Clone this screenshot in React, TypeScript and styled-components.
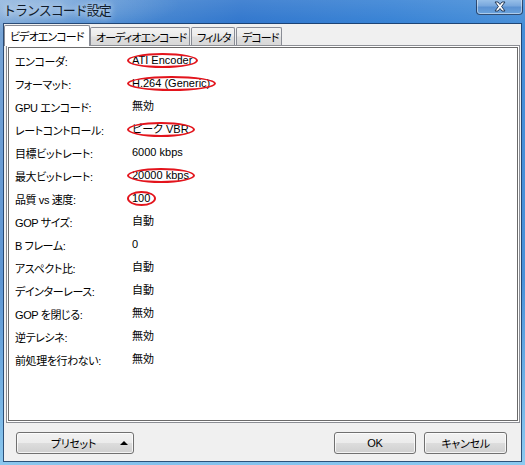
import React from "react";
import styled, { createGlobalStyle, css } from "styled-components";

const GlobalStyle = createGlobalStyle`
  html, body { margin: 0; padding: 0; width: 525px; height: 465px; overflow: hidden; background: #4a86c8; }
  #root { width: 525px; height: 465px; }
  * { box-sizing: border-box; }
`;

const UI_FONT = `"Liberation Sans", "Noto Sans CJK JP", sans-serif`;

const Window = styled.div`
  width: 525px;
  height: 465px;
  display: flex;
  flex-direction: column;
  padding: 0 4px 4px 4px;
  font-family: ${UI_FONT};
  font-feature-settings: "palt";
  background:
    radial-gradient(ellipse 140px 30px at 40px 4px, rgba(255, 255, 255, 0.25), rgba(255, 255, 255, 0)),
    linear-gradient(180deg, rgba(255, 255, 255, 0.12) 0%, rgba(255, 255, 255, 0) 6%, rgba(140, 210, 245, 0) 60%, rgba(160, 220, 248, 0.75) 100%),
    linear-gradient(100deg, #7aa6d6 0%, #4b8ad0 14%, #2d74cc 40%, #3480d4 65%, #4e95da 100%);
`;

const TitleBar = styled.div`
  height: 24px;
  display: flex;
  align-items: flex-start;
  justify-content: space-between;
`;

const Title = styled.div`
  margin-left: -1px;
  line-height: 20px;
  font-size: 13px;
  font-family: "Noto Sans CJK JP", sans-serif;
  font-feature-settings: normal;
  letter-spacing: -1px;
  color: #101c2c;
  text-shadow: 0 0 6px rgba(255, 255, 255, 0.75), 0 0 10px rgba(255, 255, 255, 0.5);
`;

const CloseButton = styled.div`
  width: 47px;
  height: 16px;
  margin-top: -1px;
  margin-right: -2px;
  border: 1px solid rgba(24, 48, 84, 0.8);
  border-top: none;
  border-radius: 0 0 4px 4px;
  background: linear-gradient(180deg, #9cc3ea 0%, #79a8dd 45%, #5b92d2 55%, #6aa3dc 100%);
  box-shadow: inset 0 0 0 1px rgba(255, 255, 255, 0.45);
  display: flex;
  align-items: center;
  justify-content: center;
`;

const Client = styled.div`
  flex: 1;
  display: flex;
  flex-direction: column;
  background: #f0f0f0;
  box-shadow: 0 0 0 1px rgba(22, 52, 92, 0.8);
  padding: 0 1px 0 2px;
`;

const TabStrip = styled.div`
  height: 21px;
  display: flex;
  align-items: flex-end;
  position: relative;
  z-index: 1;
`;

const Tab = styled.div<{ $active?: boolean; $width: number; $gap?: number }>`
  width: ${(p) => p.$width}px;
  margin-left: ${(p) => p.$gap ?? 0}px;
  display: flex;
  align-items: center;
  padding-left: 5px;
  font-size: 11px;
  letter-spacing: -0.9px;
  color: #000;
  border: 1px solid #898c95;
  border-bottom: none;
  border-radius: 2px 2px 0 0;
  white-space: nowrap;
  overflow: hidden;
  ${(p) =>
    p.$active
      ? css`
          height: 21px;
          margin-bottom: -1px;
          background: #ffffff;
        `
      : css`
          height: 18px;
          background: linear-gradient(180deg, #f3f3f3 0%, #ebebeb 45%, #dedede 55%, #d8d8d8 100%);
        `}
`;

const TabPage = styled.div`
  height: 378px;
  border: 1px solid #8c8e94;
  background: #ffffff;
  padding: 1px;
  display: flex;
`;

const Sheet = styled.div`
  flex: 1;
  border: 1px solid #6b6b6b;
  background: #ffffff;
  padding: 1px 0 0 6px;
`;

const Grid = styled.div`
  display: grid;
  grid-template-columns: 117px auto;
  grid-auto-rows: 23px;
  align-items: center;
  justify-content: start;
`;

const Label = styled.div`
  font-size: 11px;
  letter-spacing: -0.4px;
  color: #000;
  white-space: nowrap;
`;

const Value = styled.span<{ $circled?: boolean }>`
  justify-self: start;
  position: relative;
  display: inline-block;
  font-size: 11px;
  line-height: 13px;
  color: #000;
  white-space: nowrap;
  ${(p) =>
    p.$circled &&
    css`
      &::after {
        content: "";
        position: absolute;
        left: -5px;
        right: -6px;
        top: -1px;
        bottom: -1px;
        border: 2px solid #e3141c;
        border-radius: 50%;
      }
    `}
`;

const Footer = styled.div`
  flex: 1;
  display: flex;
  align-items: flex-start;
  padding: 9px 13px 0 10px;
`;

const Button = styled.div<{ $width: number; $push?: boolean; $gap?: number }>`
  width: ${(p) => p.$width}px;
  height: 22px;
  margin-left: ${(p) => (p.$push ? "auto" : `${p.$gap ?? 0}px`)};
  border: 1px solid #707070;
  border-radius: 3px;
  background: linear-gradient(180deg, #f2f2f2 0%, #ebebeb 50%, #dddddd 50%, #cfcfcf 100%);
  box-shadow: inset 0 0 0 1px rgba(255, 255, 255, 0.75);
  display: flex;
  align-items: center;
  justify-content: center;
  font-size: 11px;
  letter-spacing: -0.3px;
  color: #000;
`;

const MenuButton = styled(Button)`
  justify-content: flex-start;
  padding: 0 5px 0 10px;
`;

const ButtonText = styled.span`
  flex: 1;
  text-align: center;
`;

const UpArrow = styled.span`
  width: 0;
  height: 0;
  border-left: 4px solid transparent;
  border-right: 4px solid transparent;
  border-bottom: 4px solid #000;
`;

const rows: { label: string; value: string; circled?: boolean }[] = [
  { label: "エンコーダ:", value: "ATI Encoder", circled: true },
  { label: "フォーマット:", value: "H.264 (Generic)", circled: true },
  { label: "GPU エンコード:", value: "無効" },
  { label: "レートコントロール:", value: "ピーク VBR", circled: true },
  { label: "目標ビットレート:", value: "6000 kbps" },
  { label: "最大ビットレート:", value: "20000 kbps", circled: true },
  { label: "品質 vs 速度:", value: "100", circled: true },
  { label: "GOP サイズ:", value: "自動" },
  { label: "B フレーム:", value: "0" },
  { label: "アスペクト比:", value: "自動" },
  { label: "デインターレース:", value: "自動" },
  { label: "GOP を閉じる:", value: "無効" },
  { label: "逆テレシネ:", value: "無効" },
  { label: "前処理を行わない:", value: "無効" },
];

export default function App() {
  return (
    <>
      <GlobalStyle />
      <Window>
        <TitleBar>
          <Title>トランスコード設定</Title>
          <CloseButton>
            <svg width="14" height="11" viewBox="0 0 14 11">
              <path
                d="M2 1 L5 1 L7 3.5 L9 1 L12 1 L8.6 5.5 L12 10 L9 10 L7 7.5 L5 10 L2 10 L5.4 5.5 Z"
                fill="#ffffff"
                stroke="#243a58"
                strokeWidth="1"
                strokeLinejoin="round"
              />
            </svg>
          </CloseButton>
        </TitleBar>
        <Client>
          <TabStrip>
            <Tab $active $width={86} $gap={-2}>ビデオエンコード</Tab>
            <Tab $width={100}>オーディオエンコード</Tab>
            <Tab $width={44} $gap={1}>フィルタ</Tab>
            <Tab $width={46} $gap={1}>デコード</Tab>
          </TabStrip>
          <TabPage>
            <Sheet>
              <Grid>
                {rows.map((r) => (
                  <React.Fragment key={r.label}>
                    <Label>{r.label}</Label>
                    <Value $circled={r.circled}>{r.value}</Value>
                  </React.Fragment>
                ))}
              </Grid>
            </Sheet>
          </TabPage>
          <Footer>
            <MenuButton $width={118}>
              <ButtonText>プリセット</ButtonText>
              <UpArrow />
            </MenuButton>
            <Button $width={82} $push>OK</Button>
            <Button $width={83} $gap={8}>キャンセル</Button>
          </Footer>
        </Client>
      </Window>
    </>
  );
}
